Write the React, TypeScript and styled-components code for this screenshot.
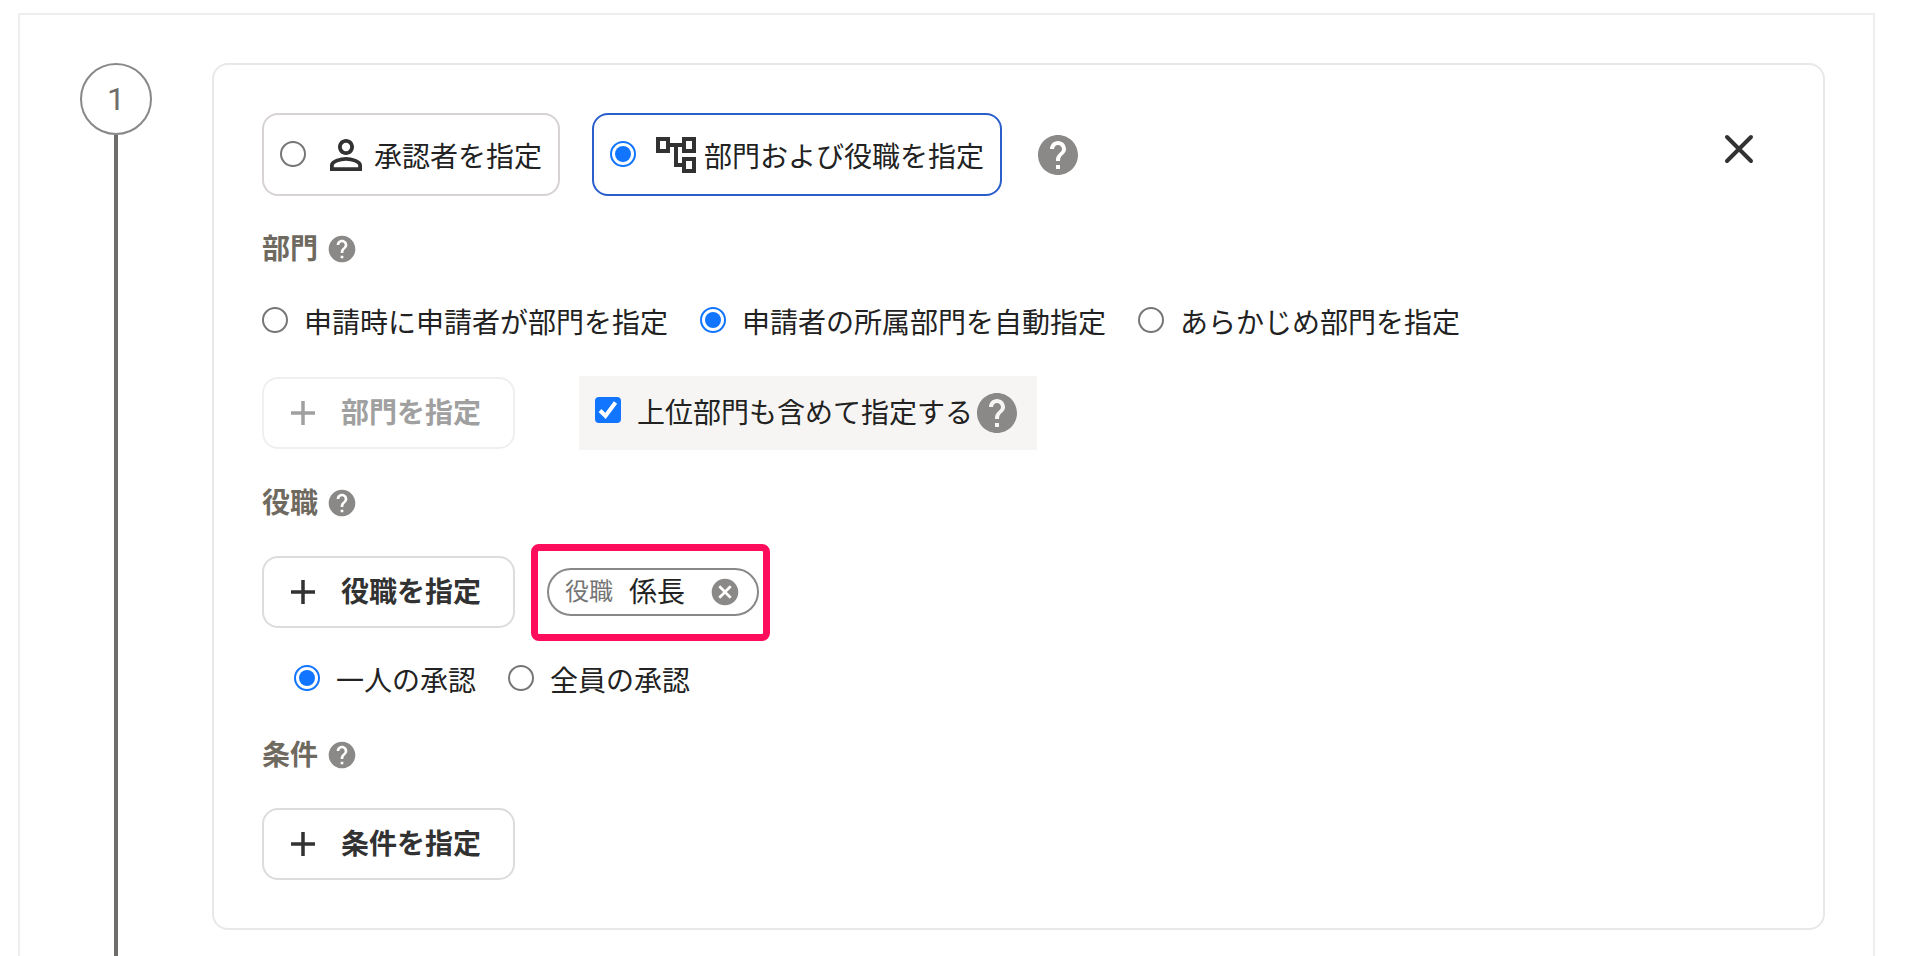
import React from "react";
import styled, { createGlobalStyle } from "styled-components";

const GlobalStyle = createGlobalStyle`
  *, *::before, *::after { box-sizing: border-box; }
  body {
    margin: 0;
    background: #fff;
    color: #222;
    font-family: "Noto Sans CJK JP", "Noto Sans", sans-serif;
    font-size: 28px;
    line-height: 40px;
  }
`;

const Page = styled.main`
  display: flex;
  min-height: 100vh;
  padding: 13px 39px 0 18px;
`;

const Panel = styled.div`
  flex: 1;
  display: flex;
  gap: 60px;
  padding: 48px 48px 0 60px;
  border: 2px solid #f0edee;
  border-bottom: 0;
`;

const StepRail = styled.div`
  flex: none;
  display: flex;
  flex-direction: column;
  align-items: center;
  width: 72px;
`;

const StepNumber = styled.div`
  display: flex;
  align-items: center;
  justify-content: center;
  width: 72px;
  height: 72px;
  border: 2px solid #888;
  border-radius: 50%;
  color: #6e6d6b;
  font-family: Roboto, Inter, sans-serif;
  font-size: 32px;
`;

const StepLine = styled.div`
  flex: 1;
  width: 4px;
  background: #6e6d6b;
`;

const Card = styled.section`
  flex: 1;
  align-self: flex-start;
  display: flex;
  flex-direction: column;
  gap: 32px;
  min-width: 0;
  margin-bottom: 26px;
  padding: 48px;
  border: 2px solid #e8e8e8;
  border-radius: 16px;
`;

const Row = styled.div<{ $gap: number }>`
  display: flex;
  align-items: center;
  gap: ${(p) => p.$gap}px;
`;

const Text = styled.span`
  padding-bottom: 4px;
`;

const OptionCard = styled.label<{ $selected?: boolean }>`
  display: flex;
  align-items: center;
  height: 83px;
  padding: 0 16px;
  border: 2px solid ${(p) => (p.$selected ? "#2a5fcb" : "#d7d2d3")};
  border-radius: 16px;
  white-space: nowrap;

  input { margin-bottom: 2px; }
  svg { margin: 0 4px 0 16px; color: #323232; }
`;

const Radio = styled.input.attrs({ type: "radio" })`
  appearance: none;
  flex: none;
  display: grid;
  place-items: center;
  width: 26px;
  height: 26px;
  margin: 0;
  border: 2px solid #767676;
  border-radius: 50%;
  background: #fff;

  &:checked { border-color: #1275ff; }
  &:checked::before {
    content: "";
    width: 16px;
    height: 16px;
    border-radius: 50%;
    background: #1275ff;
  }
`;

const RadioRow = styled.div<{ $indent?: boolean }>`
  display: flex;
  gap: 32px;
  height: 42px;
  padding-left: ${(p) => (p.$indent ? 32 : 0)}px;
  line-height: 38px;
`;

const RadioLabel = styled.label`
  display: flex;
  align-items: flex-start;
  gap: 16px;
  white-space: nowrap;

  input { margin-top: 5px; }
`;

const Heading = styled.h2`
  display: flex;
  align-items: center;
  gap: 8px;
  height: 42px;
  margin: 0;
  color: #6f6a60;
  font-size: 28px;
  font-weight: 700;
`;

const AddButton = styled.button`
  display: flex;
  align-items: center;
  gap: 14px;
  height: 72px;
  padding: 0 32px 0 15px;
  border: 2px solid #dcdcdc;
  border-radius: 16px;
  background: #fff;
  color: #323232;
  font: inherit;
  font-weight: 700;
  white-space: nowrap;

  &:disabled {
    border-color: #efefef;
    color: #a0a0a0;
  }
`;

const IconButton = styled.button<{ $size: number }>`
  flex: none;
  display: grid;
  place-items: center;
  width: ${(p) => p.$size}px;
  height: ${(p) => p.$size}px;
  padding: 0;
  border: 0;
  background: none;
  color: #8a8987;
`;

const CloseButton = styled(IconButton)`
  align-self: flex-start;
  margin: 12px 12px 0 auto;
  color: #323232;
`;

const CheckPanel = styled.div`
  display: flex;
  align-items: center;
  height: 74px;
  padding: 0 16px;
  background: #f6f5f3;
`;

const CheckLabel = styled.label`
  display: flex;
  align-items: center;
  gap: 16px;
  white-space: nowrap;
`;

const Checkbox = styled.input.attrs({ type: "checkbox" })`
  appearance: none;
  display: block;
  width: 26px;
  height: 26px;
  margin: 0;
  border: 2px solid #767676;
  border-radius: 4px;
  background: #fff;

  &:checked {
    border-color: #1275ff;
    background: #1275ff;
  }
  & + svg { display: none; }
  &:checked + svg { display: block; }
`;

const CheckboxBox = styled.span`
  position: relative;
  flex: none;
  margin-bottom: 6px;

  svg {
    position: absolute;
    inset: 0;
    pointer-events: none;
  }
`;

const ChipArea = styled.div`
  position: relative;
`;

const Highlight = styled.div`
  position: absolute;
  inset: -24px -11px -25px -16px;
  border: 7px solid #ff0c5c;
  border-radius: 8px;
  pointer-events: none;
`;

const Chip = styled.div`
  display: flex;
  align-items: center;
  height: 48px;
  padding: 0 16px;
  border: 2px solid #888;
  border-radius: 24px;
  white-space: nowrap;

  button { margin-left: 24px; }
`;

const ChipKind = styled(Text)`
  margin-right: 16px;
  color: #757575;
  font-size: 24px;
`;

function Icon({ size, d }: { size: number; d: string }) {
  return (
    <svg width={size} height={size} viewBox="0 0 24 24" fill="currentColor" display="block" aria-hidden="true">
      <path d={d} />
    </svg>
  );
}

const paths = {
  person:
    "M12 5.9a2.1 2.1 0 1 1 0 4.2 2.1 2.1 0 0 1 0-4.2m0 9c2.97 0 6.1 1.46 6.1 2.1v1.1H5.9V17c0-.64 3.13-2.1 6.1-2.1M12 4C9.79 4 8 5.79 8 8s1.79 4 4 4 4-1.79 4-4-1.79-4-4-4m0 9c-2.67 0-8 1.34-8 4v3h16v-3c0-2.66-5.33-4-8-4",
  tree: "M22 11V3h-7v3H9V3H2v8h7V8h2v10h4v3h7v-8h-7v3h-2V8h2v3h7zM7 9H4V5h3v4zm10 6h3v4h-3v-4zm0-10h3v4h-3V5z",
  help: "M12 2C6.48 2 2 6.48 2 12s4.48 10 10 10 10-4.48 10-10S17.52 2 12 2zm1 17h-2v-2h2v2zm2.07-7.75l-.9.92C13.45 12.9 13 13.5 13 15h-2v-.5c0-1.1.45-2.1 1.17-2.83l1.24-1.26c.37-.36.59-.86.59-1.41 0-1.1-.9-2-2-2s-2 .9-2 2H8c0-2.21 1.79-4 4-4s4 1.79 4 4c0 .88-.36 1.68-.93 2.25z",
  cancel:
    "M12 2C6.47 2 2 6.47 2 12s4.47 10 10 10 10-4.47 10-10S17.53 2 12 2zm5 13.59L15.59 17 12 13.41 8.41 17 7 15.59 10.59 12 7 8.41 8.41 7 12 10.59 15.59 7 17 8.41 13.41 12 17 15.59z",
};

function Help({ size, label }: { size: number; label: string }) {
  return (
    <IconButton type="button" $size={size} aria-label={label}>
      <Icon size={size} d={paths.help} />
    </IconButton>
  );
}

function Add({ children, disabled }: { children: React.ReactNode; disabled?: boolean }) {
  return (
    <AddButton type="button" disabled={disabled}>
      <svg width="48" height="48" viewBox="0 0 48 48" stroke="currentColor" strokeWidth="3.5" fill="none" aria-hidden="true">
        <path d="M24 12v24M12 24h24" />
      </svg>
      <Text>{children}</Text>
    </AddButton>
  );
}

export default function App() {
  return (
    <>
      <GlobalStyle />
      <Page>
        <Panel>
          <StepRail>
            <StepNumber>1</StepNumber>
            <StepLine />
          </StepRail>
          <Card>
            <Row $gap={32}>
              <OptionCard>
                <Radio name="target" />
                <Icon size={48} d={paths.person} />
                承認者を指定
              </OptionCard>
              <OptionCard $selected>
                <Radio name="target" defaultChecked />
                <Icon size={48} d={paths.tree} />
                部門および役職を指定
              </OptionCard>
              <Help size={48} label="承認者の指定方法のヘルプ" />
              <CloseButton type="button" $size={48} aria-label="閉じる">
                <svg width="48" height="48" viewBox="0 0 48 48" stroke="currentColor" strokeWidth="4" strokeLinecap="round" aria-hidden="true">
                  <path d="M12 12l24 24M36 12L12 36" />
                </svg>
              </CloseButton>
            </Row>

            <Heading>
              <Text>部門</Text>
              <Help size={32} label="部門のヘルプ" />
            </Heading>
            <RadioRow>
              <RadioLabel>
                <Radio name="department" />
                申請時に申請者が部門を指定
              </RadioLabel>
              <RadioLabel>
                <Radio name="department" defaultChecked />
                申請者の所属部門を自動指定
              </RadioLabel>
              <RadioLabel>
                <Radio name="department" />
                あらかじめ部門を指定
              </RadioLabel>
            </RadioRow>
            <Row $gap={64}>
              <Add disabled>部門を指定</Add>
              <CheckPanel>
                <CheckLabel>
                  <CheckboxBox>
                    <Checkbox defaultChecked />
                    <svg width="26" height="26" viewBox="0 0 26 26" fill="none" stroke="#fff" strokeWidth="4" aria-hidden="true">
                      <path d="M5 13.5l5.5 5.5L20.5 5.5" />
                    </svg>
                  </CheckboxBox>
                  <Text>上位部門も含めて指定する</Text>
                </CheckLabel>
                <Help size={48} label="上位部門のヘルプ" />
              </CheckPanel>
            </Row>

            <Heading>
              <Text>役職</Text>
              <Help size={32} label="役職のヘルプ" />
            </Heading>
            <Row $gap={32}>
              <Add>役職を指定</Add>
              <ChipArea>
                <Chip>
                  <ChipKind>役職</ChipKind>
                  <Text>係長</Text>
                  <IconButton type="button" $size={32} aria-label="係長を削除">
                    <Icon size={32} d={paths.cancel} />
                  </IconButton>
                </Chip>
                <Highlight />
              </ChipArea>
            </Row>
            <RadioRow $indent>
              <RadioLabel>
                <Radio name="approval" defaultChecked />
                一人の承認
              </RadioLabel>
              <RadioLabel>
                <Radio name="approval" />
                全員の承認
              </RadioLabel>
            </RadioRow>

            <Heading>
              <Text>条件</Text>
              <Help size={32} label="条件のヘルプ" />
            </Heading>
            <Row $gap={32}>
              <Add>条件を指定</Add>
            </Row>
          </Card>
        </Panel>
      </Page>
    </>
  );
}
